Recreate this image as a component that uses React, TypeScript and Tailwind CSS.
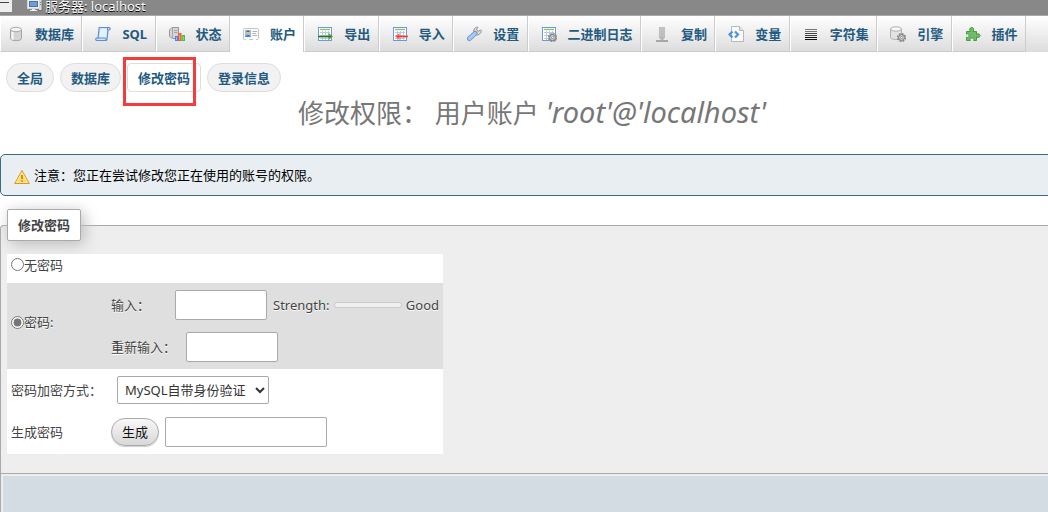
import type { ReactNode } from "react";
import clsx from "clsx";

const Icon = ({ children }: { children: ReactNode }) => (
  <svg viewBox="0 0 16 16" className="size-4 shrink-0" aria-hidden="true">
    {children}
  </svg>
);

const Sheet = () => (
  <>
    <rect x="1.5" y="1.5" width="13" height="13" fill="#fff" stroke="#6f9bd1" />
    <path d="M3 3.5h10" stroke="#8cc07a" strokeWidth="1.4" />
    <path d="M3 6.5h10M3 9.5h10M3 12.5h10M5.5 5v9M8.5 5v9M11.5 5v9" stroke="#a9bfdc" strokeWidth=".8" />
  </>
);

const Gear = () => (
  <>
    <circle cx="11.5" cy="11.5" r="3.6" fill="none" stroke="#888" strokeWidth="2" strokeDasharray="1.8 1" />
    <circle cx="11.5" cy="11.5" r="3" fill="#c4c4c4" stroke="#858585" />
    <circle cx="11.5" cy="11.5" r="1" fill="#f4f4f4" stroke="#777" strokeWidth=".5" />
  </>
);

const DatabaseIcon = () => (
  <Icon>
    <path d="M2.5 3.5v9c0 1.3 2.5 2.2 5.5 2.2s5.5-.9 5.5-2.2v-9" fill="#d4d4d4" stroke="#a5a5a5" />
    <path d="M4.5 5.5v8" stroke="#fafafa" strokeWidth="2" />
    <ellipse cx="8" cy="3.5" rx="5.5" ry="2.2" fill="#f3f3f3" stroke="#a9a9a9" />
  </Icon>
);

const SqlIcon = () => (
  <Icon>
    <path
      d="M4.2 1.5H14c1.7.2 1.500 2.500 0 2.500h-1l-1 9.500c-.1.700-.5 1-1 1H1.800c-1.500-.2-1.300-2.500 0-2.500H3z"
      fill="#cfe3fa"
      stroke="#5c8fd0"
      strokeWidth="1.2"
    />
    <path d="M5.5 3H12l-1 8.500H4.500z" fill="#e5f1fe" />
    <path d="M3 12h7.500l.5 2M12.500 4V2" fill="none" stroke="#5c8fd0" />
  </Icon>
);

const StatusIcon = () => (
  <Icon>
    <path d="M.5 4 3 1.500h6.500v11h-6l-3-2z" fill="#d6d6d6" stroke="#979797" />
    <path d="M3.500 2v10M5 4.500h3.500M5 6.500h3.500" stroke="#a5a5a5" />
    <path d="M6 10h3v5H6z" fill="#3f87ea" />
    <path d="M9 7h3.500v8H9z" fill="#f2593c" />
    <path d="M12.500 9H16v6h-3.500z" fill="#46c13e" />
    <path d="M7 11h1v3H7z" fill="#8dbcf8" />
    <path d="M10.200 8.200h1V14h-1z" fill="#fa9a80" />
    <path d="M13.700 10.200h1V14h-1z" fill="#93e58c" />
  </Icon>
);

const AccountIcon = () => (
  <Icon>
    <rect x=".5" y="2.5" width="15" height="11" rx="1" fill="#fafafa" stroke="#c4c4c4" />
    <rect x="2" y="4" width="6" height="7" fill="#8fc0f3" />
    <circle cx="5" cy="6.6" r="1.7" fill="#f0b987" />
    <path d="M3.300 6c0-2 3.400-2 3.400 0z" fill="#8a5b2f" />
    <path d="M2.500 11c0-3 5-3 5 0z" fill="#4383cc" />
    <path d="M9.500 5.500H14M9.500 7.500H13M9.500 9.500H14" stroke="#a9b4c0" />
    <path d="M3 13.500h3M10 13.500h3" stroke="#fff" />
  </Icon>
);

const ExportIcon = () => (
  <Icon>
    <Sheet />
    <path d="M1 9.500h10.500V7l4.500 3.500-4.500 3.500v-2.500H1z" fill="#4fa345" />
    <path d="M1 10.500h13" stroke="#2c7425" />
  </Icon>
);

const ImportIcon = () => (
  <Icon>
    <Sheet />
    <path d="M16 9.500H7.500V7L3 10.500 7.500 14v-2.500H16z" fill="#f5665f" />
    <path d="M5 10.500h10" stroke="#e03a37" />
  </Icon>
);

const SettingsIcon = () => (
  <Icon>
    <path
      d="M8 6.500c-1-2.500.5-5 3.500-5.500l.3.500-1.300 2.300 1.600 1.500 2.400-1.200.8.500c0 3-3 5-5.500 4z"
      fill="#dedede"
      stroke="#8f8f8f"
    />
    <path d="m9 7.500-5.500 5" stroke="#6a92cc" strokeWidth="5" strokeLinecap="round" />
    <path d="m9 7.500-5.500 5" stroke="#a9c9f5" strokeWidth="3.2" strokeLinecap="round" />
  </Icon>
);

const BinlogIcon = () => (
  <Icon>
    <Sheet />
    <Gear />
  </Icon>
);

const ReplicationIcon = () => (
  <Icon>
    <path d="M6.500 1v11M9.500 1v11" stroke="#8d8d8d" strokeWidth="2" />
    <path d="M6.500 1v10M9.500 1v10" stroke="#cfcfcf" strokeWidth=".8" />
    <path d="M5 11h6l-2 3H7z" fill="#b5b5b5" />
    <path d="M2 15h12" stroke="#929292" strokeWidth="1.5" />
  </Icon>
);

const VariablesIcon = () => (
  <Icon>
    <path d="M3.500.5h8l4 4v11h-12z" fill="#fafafa" stroke="#b9b9b9" />
    <path d="M11.500.5v4h4" fill="#e5e5e5" stroke="#b9b9b9" />
    <path d="m4.500 5.500-3 3 3 3M7 5.500l3 3-3 3" fill="none" stroke="#4993e8" strokeWidth="2.2" />
  </Icon>
);

const CharsetIcon = () => (
  <Icon>
    <path d="M2 3.500h12M2 5.500h12" stroke="#777" />
    <path d="M2 7.500h12M2 9.500h12" stroke="#444" />
    <path d="M2 11.500h12M2 13.500h12" stroke="#111" />
  </Icon>
);

const EngineIcon = () => (
  <Icon>
    <path d="M.5 3v8.500c0 1.200 2.400 2 5.300 2s5.700-.8 5.700-2V3" fill="#e2e2e2" stroke="#b2b2b2" />
    <ellipse cx="6" cy="3" rx="5.5" ry="2.2" fill="#f7f7f7" stroke="#b2b2b2" />
    <Gear />
  </Icon>
);

const PluginIcon = () => (
  <Icon>
    <path
      d="M1.500 5.500h4c-1.500-1.700-.8-4 1.200-4s2.700 2.300 1.300 4h3.500v3c1.700-1.300 3.500-.5 3.500 1.200s-1.800 2.500-3.500 1.200v3.600H8.700c.8-1.800 0-2.500-1.700-2.500s-2.500.7-1.700 2.500H1.500v-3.300c2 .8 2.500-.2 2.500-1.600s-.5-2.300-2.500-1.500z"
      fill="#6fbe67"
      stroke="#469e40"
    />
  </Icon>
);

const ServerIcon = () => (
  <Icon>
    <rect x="11.5" y="1.5" width="3.5" height="11" fill="#ddd" stroke="#777" />
    <path d="M13 4.500h1M13 6.500h1" stroke="#4da845" />
    <rect x=".5" y="1.5" width="12" height="9" fill="#eee" stroke="#d5d5d5" />
    <rect x="2.5" y="3.5" width="8" height="5" fill="#6f9bdc" stroke="#4872b8" />
    <path d="M5 11h3v1h2v1H3v-1h2z" fill="#eee" />
  </Icon>
);

const WarningIcon = () => (
  <Icon>
    <path d="M8 1.500 15.300 14.500H.7z" fill="#fbdc63" stroke="#d9962b" strokeLinejoin="round" />
    <path d="m8 3.500 5.500 10h-11z" fill="none" stroke="#fff0a8" strokeWidth=".8" />
    <path d="M8 6v4M8 11.300v1.500" stroke="#b97d22" strokeWidth="1.6" />
  </Icon>
);

const tabs = [
  { label: "数据库", icon: <DatabaseIcon /> },
  { label: "SQL", icon: <SqlIcon /> },
  { label: "状态", icon: <StatusIcon /> },
  { label: "账户", icon: <AccountIcon />, active: true },
  { label: "导出", icon: <ExportIcon /> },
  { label: "导入", icon: <ImportIcon /> },
  { label: "设置", icon: <SettingsIcon /> },
  { label: "二进制日志", icon: <BinlogIcon /> },
  { label: "复制", icon: <ReplicationIcon /> },
  { label: "变量", icon: <VariablesIcon /> },
  { label: "字符集", icon: <CharsetIcon /> },
  { label: "引擎", icon: <EngineIcon /> },
  { label: "插件", icon: <PluginIcon /> },
];

const subTabs = [
  { label: "全局" },
  { label: "数据库" },
  { label: "修改密码", active: true },
  { label: "登录信息" },
];

const inputClass = "h-[30px] rounded-xs border border-[#aaa] bg-white px-1.5 outline-none";

const App = () => {
  return (
    <div className="flex min-h-screen flex-col overflow-x-hidden bg-white font-['Noto_Sans','Noto_Sans_CJK_SC',sans-serif] text-[13px] leading-5 text-[#444]">
      <header className="flex h-4 items-start border-b border-[#aaa] bg-[#888] text-white">
        <svg viewBox="0 0 12 12" className="size-3 shrink-0" aria-hidden="true">
          <path d="M0 0h12v12H0z" fill="#eee" />
          <path d="M0 2.500h9" stroke="#444" />
        </svg>
        <a href="#server" className="ml-[15px] flex h-3 items-center gap-0.5 leading-3 [text-shadow:0_1px_0_#000]">
          <ServerIcon />
          服务器: localhost
        </a>
      </header>

      <nav className="flex h-9 shrink-0 overflow-hidden bg-linear-to-b from-white to-[#dcdcdc] pr-[22px] whitespace-nowrap">
        {tabs.map((tab, index) => (
          <a
            key={tab.label}
            href="#tab"
            className={clsx(
              "flex shrink-0 grow items-center gap-[11px] border-r border-l border-r-[#ccc] border-l-white pr-[7px] font-bold text-[#235a81]",
              index === 0 ? "pl-[7px]" : "pl-3",
              tab.active ? "bg-white" : "border-b border-b-[#ccc]"
            )}
          >
            {tab.icon}
            {tab.label}
          </a>
        ))}
      </nav>

      <main className="flex grow flex-col">
        <div className="relative flex gap-1.5 px-1.5 pt-[11px]">
          {subTabs.map((tab) => (
            <a
              key={tab.label}
              href="#section"
              className={clsx(
                "flex h-[29px] items-center border border-[#ddd] px-2.5 font-bold text-[#235a81]",
                tab.active ? "rounded-sm bg-white" : "rounded-full bg-[#f2f2f2]"
              )}
            >
              {tab.label}
            </a>
          ))}
          <span className="pointer-events-none absolute top-[5px] left-[123px] h-[49px] w-[73px] border-3 border-[#f93a3a]" />
        </div>

        <h2 className="mt-1 h-8 pl-4 text-center text-[26px] leading-8 text-[#777]">
          修改权限： 用户账户 <i className="text-[29px]">'root'@'localhost'</i>
        </h2>

        <div className="mt-[26px] -mr-2 flex h-[42px] items-center gap-1 rounded-[5px] border border-[#3a6c7e] bg-[#e8eef1] px-[13px] text-black">
          <span className="pt-1">
            <WarningIcon />
          </span>
          注意：您正在尝试修改您正在使用的账号的权限。
        </div>

        <form className="mt-[13px] -mr-2 flex grow flex-col">
          <fieldset className="min-w-0 rounded-t-sm border border-b-0 border-[#aaa] bg-[#eee] px-1.5 pb-[19px] [text-shadow:0_1px_0_#fff]">
            <legend className="h-8 rounded-xs border border-[#aaa] bg-white px-2.5 leading-[30px] font-bold shadow-[3px_3px_15px_#bbb]">
              修改密码
            </legend>

            <div className="mt-[13px] w-[436px] bg-white">
              <label className="flex h-[29px] items-center px-1 pb-2">
                <input type="radio" name="pw" className="size-[13px]" />
                无密码
              </label>

              <div className="flex h-[86px] items-center bg-[#dfdfdf] px-1">
                <label className="flex w-[100px] items-center pb-2">
                  <input type="radio" name="pw" defaultChecked className="size-[13px] accent-[#767676]" />
                  密码:
                </label>
                <div className="flex grow flex-col gap-3">
                  <div className="flex items-center">
                    <label htmlFor="password" className="w-16">
                      输入：
                    </label>
                    <input id="password" type="password" className={clsx(inputClass, "w-[92px]")} />
                    <span className="ml-1.5">Strength:</span>
                    <span
                      role="meter"
                      aria-label="Strength"
                      className="mx-1 h-1.5 grow rounded-full border border-[#ccc] bg-[#efefef]"
                    />
                    <span>Good</span>
                  </div>
                  <div className="flex items-center">
                    <label htmlFor="retype" className="w-[75px]">
                      重新输入：
                    </label>
                    <input id="retype" type="password" className={clsx(inputClass, "w-[92px]")} />
                  </div>
                </div>
              </div>

              <div className="flex h-[41px] items-center px-1">
                <label htmlFor="plugin" className="w-[106px]">
                  密码加密方式：
                </label>
                <select
                  id="plugin"
                  className="h-7 w-[152px] rounded-xs border border-[#aaa] bg-white px-[3px] text-[#333]"
                >
                  <option>MySQL自带身份验证</option>
                </select>
              </div>

              <div className="flex h-11 items-center px-1">
                <label htmlFor="generated" className="w-[100px]">
                  生成密码
                </label>
                <button
                  type="button"
                  className="h-7 w-12 rounded-full border border-[#aaa] bg-linear-to-b from-[#f8f8f8] to-[#d8d8d8] text-[#111] shadow-[0_1px_1px_#ccc]"
                >
                  生成
                </button>
                <input id="generated" type="text" className={clsx(inputClass, "ml-1.5 w-[162px]")} />
              </div>
            </div>
          </fieldset>
          <div className="grow border-t border-l border-[#aaa] bg-[#d3dce3] shadow-[inset_2px_2px_1px_#eee]" />
        </form>
      </main>
    </div>
  );
};

export default App;
